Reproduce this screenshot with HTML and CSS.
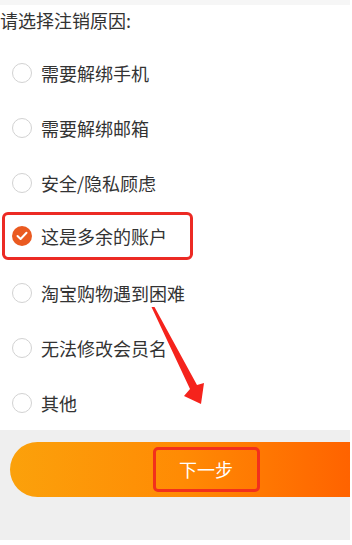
FILE: index.html
```html
<!DOCTYPE html>
<html lang="zh-CN">
<head>
    <meta charset="UTF-8">
    <meta name="viewport" content="width=device-width, initial-scale=1.0">
    <title>注销原因</title>
    <link rel="stylesheet" href="styles.css">
</head>
<body>
    <div class="page">
        <div class="top-band"></div>
        <div class="title">请选择注销原因:</div>
        <ul class="reasons">
            <li class="reason"><span class="radio"></span><span class="label">需要解绑手机</span></li>
            <li class="reason"><span class="radio"></span><span class="label">需要解绑邮箱</span></li>
            <li class="reason"><span class="radio"></span><span class="label">安全/隐私顾虑</span></li>
            <li class="reason">
                <span class="mark-box">
                    <span class="radio checked">
                        <svg width="12" height="10" viewBox="0 0 12 10"><path d="M1.5 5 L4.6 8 L10.5 1.8" fill="none" stroke="#fff" stroke-width="2" stroke-linecap="round" stroke-linejoin="round"/></svg>
                    </span><span class="label">这是多余的账户</span>
                </span>
            </li>
            <li class="reason"><span class="radio"></span><span class="label">淘宝购物遇到困难</span></li>
            <li class="reason"><span class="radio"></span><span class="label">无法修改会员名</span></li>
            <li class="reason"><span class="radio"></span><span class="label">其他</span></li>
        </ul>
        <div class="footer">
            <button class="next"><span class="next-box">下一步</span></button>
        </div>
        <svg class="arrow" width="352" height="545" viewBox="0 0 352 545">
            <polygon points="151.5,307 154.5,307 197,385 204,383 201,404 184,396 190,389" fill="#f5231c"/>
        </svg>
    </div>
</body>
</html>
```

FILE: styles.css
```css
body {
    margin: 0;
    background-color: #fff;
    font-family: "Noto Sans CJK SC", "Noto Sans", sans-serif;
    color: #333;
}
.page {
    position: relative;
    width: 350px;
    height: 545px;
}
.top-band {
    height: 5px;
    background-color: #f6f6f6;
}
.title {
    height: 30px;
    line-height: 30px;
    margin-bottom: 10px;
    font-size: 18px;
    color: #333;
}
.reasons {
    list-style: none;
    margin: 0;
    padding: 0;
}
.reason {
    height: 55px;
    display: flex;
    align-items: center;
    padding-left: 12px;
    font-size: 18px;
}
.radio {
    width: 18px;
    height: 18px;
    border: 1px solid #d2d2d2;
    border-radius: 50%;
    margin-right: 9px;
    flex-shrink: 0;
    display: flex;
    align-items: center;
    justify-content: center;
}
.radio.checked {
    width: 20px;
    height: 20px;
    border: none;
    background-color: #ea5a20;
}
.label {
    line-height: 24px;
}
.reason .mark-box {
    display: flex;
    align-items: center;
    margin-left: -10px;
    margin-top: -3px;
    width: 178px;
    height: 42px;
    padding-left: 7px;
    border: 3px solid #ec2a24;
    border-radius: 6px;
}
.footer {
    height: 110px;
    padding-top: 12px;
    padding-left: 10px;
    box-sizing: border-box;
    background-color: #efefef;
}
.next {
    width: 340px;
    height: 55px;
    border: none;
    border-radius: 28px 0 0 28px;
    background: linear-gradient(to right, #fba10b, #ff8b04 50%, #ff6300);
    display: flex;
    align-items: center;
    justify-content: center;
    padding: 0 0 0 52px;
    font-family: inherit;
    cursor: pointer;
}
.next-box {
    width: 101px;
    height: 39px;
    line-height: 39px;
    border: 3px solid #f2301c;
    border-radius: 5px;
    color: #fff;
    font-size: 18px;
    text-align: center;
}
.arrow {
    position: absolute;
    left: 0;
    top: 0;
    pointer-events: none;
}
```
